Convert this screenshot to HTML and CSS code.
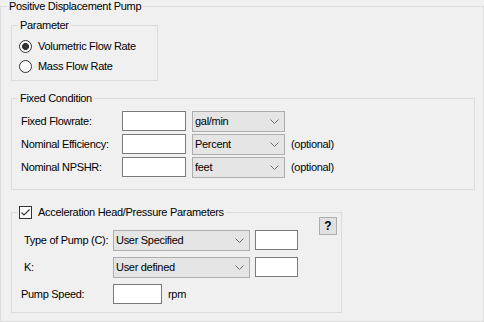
FILE: index.html
```html
<!DOCTYPE html>
<html>
<head>
<meta charset="utf-8">
<link rel="stylesheet" href="styles.css">
</head>
<body>
<fieldset class="group outer">
  <legend class="legend">Positive Displacement Pump</legend>
  <div class="outer-body">
    <fieldset class="group param">
      <legend class="legend">Parameter</legend>
      <div class="param-body">
        <label class="radio-row"><input class="radio" type="radio" name="p" checked><span>Volumetric Flow Rate</span></label>
        <label class="radio-row"><input class="radio" type="radio" name="p"><span>Mass Flow Rate</span></label>
      </div>
    </fieldset>

    <fieldset class="group fixed">
      <legend class="legend">Fixed Condition</legend>
      <div class="fixed-body">
        <div class="row">
          <span class="lbl lbl-fixed">Fixed Flowrate:</span>
          <input class="txt txt-fixed" type="text">
          <div class="combo combo-unit"><span>gal/min</span><svg class="chev" width="9" height="5" viewBox="0 0 9 5"><polyline points="0.5,0.5 4.5,4.5 8.5,0.5" fill="none" stroke="#6d6d6d" stroke-width="1"/></svg></div>
        </div>
        <div class="row">
          <span class="lbl lbl-fixed">Nominal Efficiency:</span>
          <input class="txt txt-fixed" type="text">
          <div class="combo combo-unit"><span>Percent</span><svg class="chev" width="9" height="5" viewBox="0 0 9 5"><polyline points="0.5,0.5 4.5,4.5 8.5,0.5" fill="none" stroke="#6d6d6d" stroke-width="1"/></svg></div>
          <span class="opt">(optional)</span>
        </div>
        <div class="row">
          <span class="lbl lbl-fixed">Nominal NPSHR:</span>
          <input class="txt txt-fixed" type="text">
          <div class="combo combo-unit"><span>feet</span><svg class="chev" width="9" height="5" viewBox="0 0 9 5"><polyline points="0.5,0.5 4.5,4.5 8.5,0.5" fill="none" stroke="#6d6d6d" stroke-width="1"/></svg></div>
          <span class="opt">(optional)</span>
        </div>
      </div>
    </fieldset>

    <fieldset class="group accel">
      <legend class="legend legend-check">
        <span class="check"><svg width="11" height="11" viewBox="0 0 11 11"><polyline points="1.5,5.5 4,8 9.5,2.5" fill="none" stroke="#333" stroke-width="1.1"/></svg></span>
        <span>Acceleration Head/Pressure Parameters</span>
      </legend>
      <div class="accel-body">
        <button class="help" type="button">?</button>
        <div class="row">
          <span class="lbl lbl-acc indent">Type of Pump (C):</span>
          <div class="combo combo-acc"><span>User Specified</span><svg class="chev" width="9" height="5" viewBox="0 0 9 5"><polyline points="0.5,0.5 4.5,4.5 8.5,0.5" fill="none" stroke="#6d6d6d" stroke-width="1"/></svg></div>
          <input class="txt txt-small" type="text">
        </div>
        <div class="row row-gap">
          <span class="lbl lbl-acc indent">K:</span>
          <div class="combo combo-acc"><span>User defined</span><svg class="chev" width="9" height="5" viewBox="0 0 9 5"><polyline points="0.5,0.5 4.5,4.5 8.5,0.5" fill="none" stroke="#6d6d6d" stroke-width="1"/></svg></div>
          <input class="txt txt-small" type="text">
        </div>
        <div class="row row-gap">
          <span class="lbl lbl-acc">Pump Speed:</span>
          <input class="txt txt-speed" type="text">
          <span class="unit">rpm</span>
        </div>
      </div>
    </fieldset>
  </div>
</fieldset>
</body>
</html>
```

FILE: styles.css
```css
html, body {
  margin: 0;
  padding: 0;
  background: #f0f0f0;
}
body {
  font-family: "Liberation Sans", Arial, sans-serif;
  font-size: 11px;
  letter-spacing: -0.3px;
  color: #000;
  width: 484px;
  height: 322px;
  overflow: hidden;
}
.group {
  margin: 0;
  padding: 0;
  border: 1px solid #dcdcdc;
  box-sizing: border-box;
  min-inline-size: 0;
}
.legend {
  margin-left: 6px;
  padding: 0 2px;
  line-height: 13px;
  height: 13px;
  font-size: 11px;
}
.outer {
  width: 484px;
}
.outer-body {
  padding: 6px 0 8px 10px;
}
.param {
  width: 147px;
}
.param-body {
  padding: 5px 0 4px 7px;
  display: flex;
  flex-direction: column;
  gap: 1px;
}
.radio-row {
  display: flex;
  align-items: center;
  gap: 6px;
  height: 19px;
  line-height: 13px;
}
.radio {
  -webkit-appearance: none;
  appearance: none;
  margin: 0;
  width: 13px;
  height: 13px;
  box-sizing: border-box;
  border: 1px solid #333;
  border-radius: 50%;
  background: #fff;
}
.radio:checked {
  background: radial-gradient(circle, #333 0 3.2px, #fff 3.8px);
}
.fixed {
  margin-top: 11px;
  width: 464px;
}
.fixed-body {
  padding: 6px 0 11px 9px;
  display: flex;
  flex-direction: column;
  gap: 2px;
}
.row {
  display: flex;
  align-items: flex-start;
  height: 21px;
}
.row-gap {
  margin-top: 6px;
}
.lbl {
  line-height: 20px;
  white-space: nowrap;
}
.lbl-fixed {
  width: 101px;
}
.txt {
  margin: 0;
  padding: 0;
  height: 20px;
  box-sizing: border-box;
  border: 1px solid #7a7a7a;
  background: #fff;
  outline: none;
}
.txt-fixed {
  width: 64px;
  margin-right: 6px;
}
.combo {
  height: 21px;
  box-sizing: border-box;
  border: 1px solid #adadad;
  background: #e5e5e5;
  display: flex;
  align-items: center;
  justify-content: space-between;
  padding: 0 5px 0 2px;
  line-height: 19px;
}
.chev {
  display: block;
  flex: none;
}
.combo-unit {
  width: 93px;
}
.opt {
  margin-left: 6px;
  line-height: 20px;
}
.accel {
  margin-top: 16px;
  width: 331px;
}
.legend-check {
  display: flex;
  align-items: center;
  gap: 6px;
  padding: 0 2px 0 1px;
}
.check {
  width: 13px;
  height: 13px;
  box-sizing: border-box;
  border: 1px solid #333;
  background: #fff;
  display: flex;
  align-items: center;
  justify-content: center;
}
.check svg {
  display: block;
}
.accel-body {
  position: relative;
  padding: 11px 0 7px 9px;
}
.lbl-acc {
  width: 92px;
}
.indent {
  width: 89px;
  margin-left: 3px;
}
.combo-acc {
  width: 137px;
  margin-right: 5px;
}
.txt-small {
  width: 43px;
}
.txt-speed {
  width: 49px;
  margin-right: 6px;
}
.unit {
  line-height: 20px;
}
.help {
  position: absolute;
  top: -2px;
  right: 4px;
  width: 18px;
  height: 18px;
  margin: 0;
  padding: 0;
  box-sizing: border-box;
  border: 1px solid #adadad;
  background: #e1e1e1;
  font-family: "Liberation Sans", Arial, sans-serif;
  font-size: 12px;
  font-weight: bold;
  line-height: 16px;
  letter-spacing: 0;
  color: #000;
}
```
